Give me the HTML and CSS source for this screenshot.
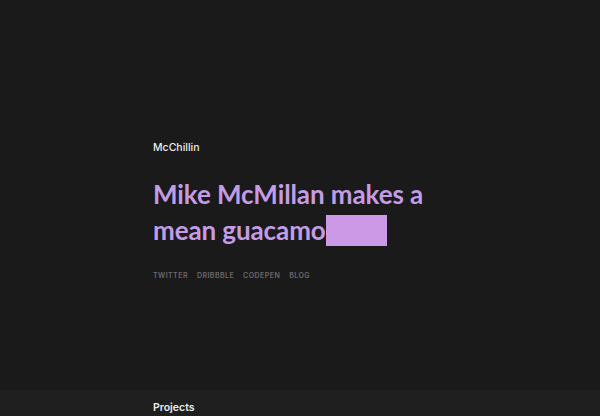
FILE: index.html
```html
<!DOCTYPE html>
<html lang="en">
<head>
<meta charset="utf-8">
<title>McChillin</title>
<link rel="stylesheet" href="styles.css">
</head>
<body>
<header class="hero">
  <div class="wrap">
    <div class="brand">McChillin</div>
    <h1 class="headline">Mike McMillan makes a mean guacamo<span class="cursor"></span></h1>
    <nav class="links">
      <a href="#">Twitter</a>
      <a href="#">Dribbble</a>
      <a href="#">Codepen</a>
      <a href="#">Blog</a>
    </nav>
  </div>
</header>
<section class="projects">
  <div class="wrap">
    <h2 class="section-title">Projects</h2>
  </div>
</section>
</body>
</html>
```
FILE: styles.css
```css
html, body {
  margin: 0;
  padding: 0;
}
body {
  background: #1a1a1a;
  font-family: Lato, "Noto Sans", sans-serif;
  color: #e8e8e8;
  height: 416px;
  overflow: hidden;
}
.wrap {
  width: 280px;
  margin-left: 153px;
}
.hero {
  height: 390px;
  box-sizing: border-box;
  padding-top: 141px;
}
.brand {
  font-family: Inter, sans-serif;
  font-size: 10.5px;
  font-weight: 500;
  line-height: 14px;
  color: #ececec;
}
.headline {
  margin: 21px 0 0;
  font-size: 26px;
  line-height: 36px;
  font-weight: 700;
  letter-spacing: -0.1px;
  color: #c49ce6;
}
.cursor {
  display: inline-block;
  width: 61px;
  height: 31px;
  background: #cc99e6;
  vertical-align: -6px;
}
.links {
  display: flex;
  gap: 9px;
  margin-top: 23px;
}
.links a {
  font-family: Inter, sans-serif;
  font-size: 7px;
  font-weight: 600;
  text-transform: uppercase;
  letter-spacing: 0.45px;
  color: #6a6a6a;
  text-decoration: none;
  line-height: 10px;
}
.projects {
  background: #1f1f1f;
  height: 26px;
  padding-top: 11px;
  box-sizing: border-box;
}
.section-title {
  margin: 0;
  font-family: Inter, sans-serif;
  font-size: 10.5px;
  font-weight: 600;
  line-height: 14px;
  color: #ececec;
}
```
